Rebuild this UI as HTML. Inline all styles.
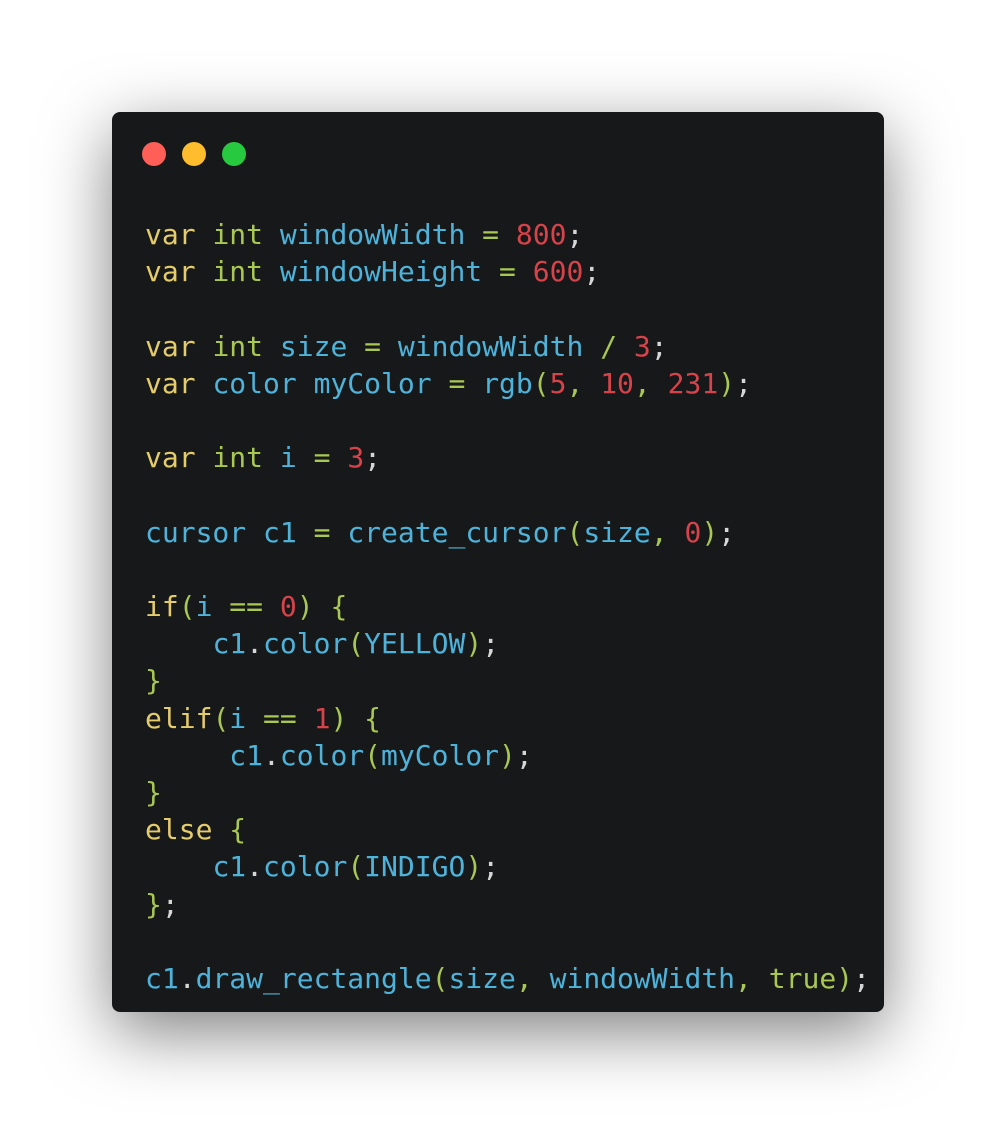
<!DOCTYPE html>
<html><head><meta charset="utf-8"><style>
html,body{margin:0;padding:0;background:#fff;width:996px;height:1124px;overflow:hidden}
.win{position:absolute;left:112px;top:112px;width:772px;height:900px;background:#171819;border-radius:8px;box-shadow:0 20px 68px rgba(0,0,0,0.5)}
.d{position:absolute;top:30px;width:24px;height:24px;border-radius:50%}
pre{position:absolute;left:33px;top:104px;margin:0;font-family:"DejaVu Sans Mono","Liberation Mono",monospace;font-size:28px;line-height:37.2px;color:#d6d6d6}
.k{color:#e5cc6b}.t{color:#a8c853}.i{color:#4eb3da}.n{color:#d7434b}.g{color:#a8c853}
</style></head><body>
<div class="win">
<div class="d" style="left:30px;background:#ff5f56"></div>
<div class="d" style="left:70px;background:#ffbd2e"></div>
<div class="d" style="left:110px;background:#27c93f"></div>
<pre><span class="k">var</span> <span class="t">int</span> <span class="i">windowWidth</span> <span class="g">=</span> <span class="n">800</span>;
<span class="k">var</span> <span class="t">int</span> <span class="i">windowHeight</span> <span class="g">=</span> <span class="n">600</span>;

<span class="k">var</span> <span class="t">int</span> <span class="i">size</span> <span class="g">=</span> <span class="i">windowWidth</span> <span class="g">/</span> <span class="n">3</span>;
<span class="k">var</span> <span class="i">color</span> <span class="i">myColor</span> <span class="g">=</span> <span class="i">rgb</span><span class="g">(</span><span class="n">5</span><span class="g">,</span> <span class="n">10</span><span class="g">,</span> <span class="n">231</span><span class="g">)</span>;

<span class="k">var</span> <span class="t">int</span> <span class="i">i</span> <span class="g">=</span> <span class="n">3</span>;

<span class="i">cursor</span> <span class="i">c1</span> <span class="g">=</span> <span class="i">create_cursor</span><span class="g">(</span><span class="i">size</span><span class="g">,</span> <span class="n">0</span><span class="g">)</span>;

<span class="k">if</span><span class="g">(</span><span class="i">i</span> <span class="g">==</span> <span class="n">0</span><span class="g">)</span> <span class="g">{</span>
    <span class="i">c1</span>.<span class="i">color</span><span class="g">(</span><span class="i">YELLOW</span><span class="g">)</span>;
<span class="g">}</span>
<span class="k">elif</span><span class="g">(</span><span class="i">i</span> <span class="g">==</span> <span class="n">1</span><span class="g">)</span> <span class="g">{</span>
     <span class="i">c1</span>.<span class="i">color</span><span class="g">(</span><span class="i">myColor</span><span class="g">)</span>;
<span class="g">}</span>
<span class="k">else</span> <span class="g">{</span>
    <span class="i">c1</span>.<span class="i">color</span><span class="g">(</span><span class="i">INDIGO</span><span class="g">)</span>;
<span class="g">}</span>;

<span class="i">c1</span>.<span class="i">draw_rectangle</span><span class="g">(</span><span class="i">size</span><span class="g">,</span> <span class="i">windowWidth</span><span class="g">,</span> <span class="t">true</span><span class="g">)</span>;</pre>
</div>
</body></html>
